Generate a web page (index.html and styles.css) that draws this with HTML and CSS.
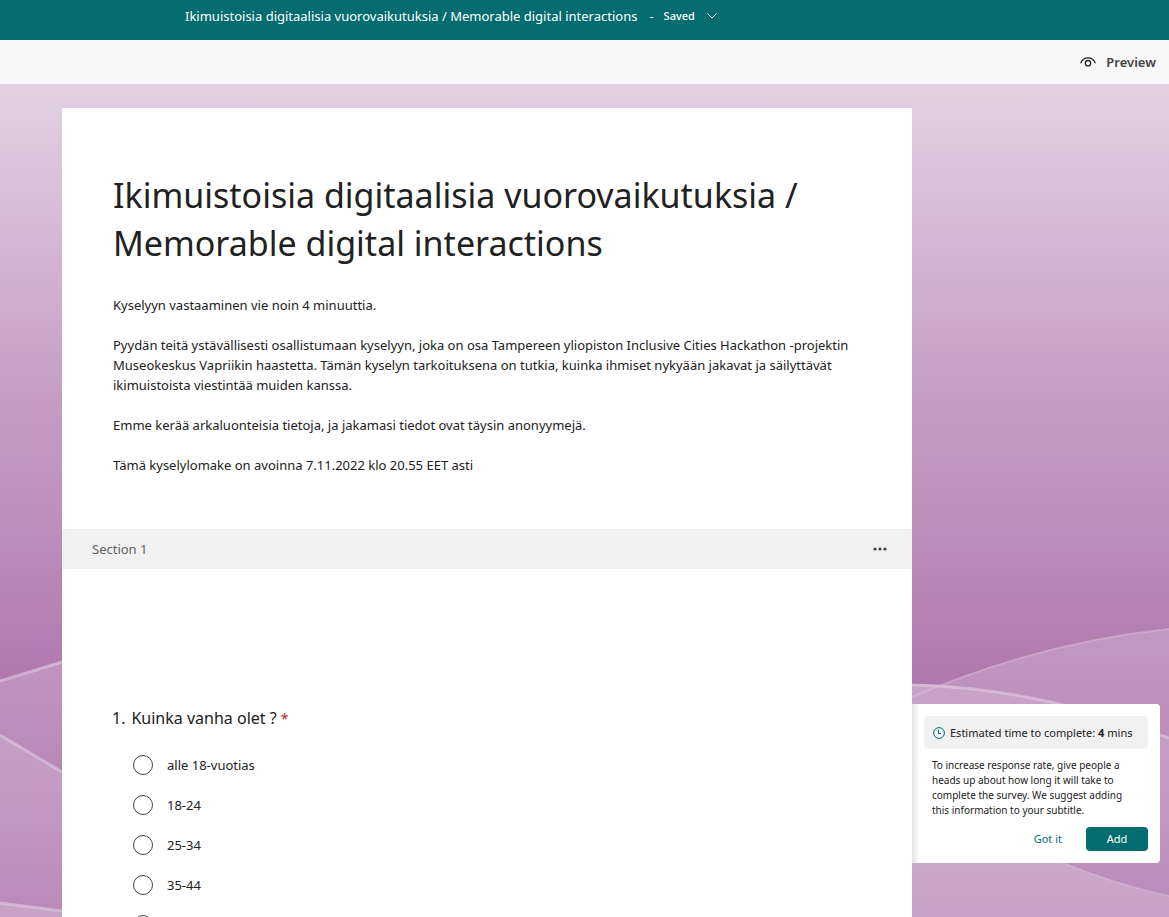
FILE: index.html
```html
<!DOCTYPE html>
<html lang="fi">
<head>
<meta charset="utf-8">
<meta name="viewport" content="width=device-width, initial-scale=1">
<title>Ikimuistoisia digitaalisia vuorovaikutuksia / Memorable digital interactions</title>
<link rel="stylesheet" href="styles.css">
</head>
<body>
<header class="topbar">
  <span class="topbar-title">Ikimuistoisia digitaalisia vuorovaikutuksia / Memorable digital interactions</span>
  <span class="topbar-dash">-</span>
  <button class="saved" type="button">Saved
    <svg class="chevron" viewBox="0 0 10 6" aria-hidden="true"><path d="M.5.5 5 5 9.500.5"/></svg>
  </button>
</header>
<nav class="toolbar">
  <button class="preview" type="button">
    <svg class="eye" viewBox="0 0 16 10" aria-hidden="true"><path d="M.7 6.200C1.800 2.900 4.500.8 8 .8s6.200 2.100 7.300 5.400"/><circle cx="8" cy="6.200" r="2.700"/></svg>
    Preview
  </button>
</nav>
<main class="canvas">
  <svg class="backdrop" viewBox="0 0 1169 833" preserveAspectRatio="none" aria-hidden="true">
    <defs>
      <linearGradient id="sky" x1="0" y1="0" x2="0" y2="600" gradientUnits="userSpaceOnUse">
        <stop offset="0" stop-color="#e3d1e3"/>
        <stop offset=".26" stop-color="#d4b7d4"/>
        <stop offset=".52" stop-color="#c59dc3"/>
        <stop offset=".75" stop-color="#bc8dba"/>
        <stop offset="1" stop-color="#b078ae"/>
      </linearGradient>
      <linearGradient id="hill" x1="0" y1="545" x2="0" y2="690" gradientUnits="userSpaceOnUse">
        <stop offset="0" stop-color="#c399c2"/>
        <stop offset="1" stop-color="#b987b7"/>
      </linearGradient>
      <linearGradient id="dune" x1="0" y1="600" x2="0" y2="820" gradientUnits="userSpaceOnUse">
        <stop offset="0" stop-color="#c9a3c8"/>
        <stop offset=".5" stop-color="#c39ac2"/>
        <stop offset="1" stop-color="#bb8ab9"/>
      </linearGradient>
      <linearGradient id="front" x1="0" y1="760" x2="0" y2="833" gradientUnits="userSpaceOnUse">
        <stop offset="0" stop-color="#cbaaca"/>
        <stop offset="1" stop-color="#c8a2c6"/>
      </linearGradient>
    </defs>
    <rect width="1169" height="833" fill="url(#sky)"/>
    <path fill="url(#hill)" d="M0 598 62 578V833H0z"/>
    <path fill="url(#dune)" d="M0 651 62 688V833H0z"/>
    <path fill="url(#front)" d="M0 819 62 827V833H0z"/>
    <path fill="url(#hill)" d="M912 613Q1040 558 1169 545V833H912z"/>
    <path fill="url(#dune)" d="M912 600Q1040 604 1169 654V833H912z"/>
    <path fill="url(#front)" d="M912 700Q1045 785 1169 812V833H912z"/>
    <g class="rim">
      <path d="M0 597 62 578M0 651 62 688M0 819 62 827M912 601Q1040 604 1169 654"/>
      <path class="thin" d="M912 613Q1040 558 1169 545M912 700Q1045 785 1169 812"/>
    </g>
  </svg>
  <form class="sheet">
    <section class="intro">
      <h1>Ikimuistoisia digitaalisia vuorovaikutuksia / Memorable digital interactions</h1>
      <p>Kyselyyn vastaaminen vie noin 4 minuuttia.</p>
      <p>Pyydän teitä ystävällisesti osallistumaan kyselyyn, joka on osa Tampereen yliopiston Inclusive Cities Hackathon -projektin Museokeskus Vapriikin haastetta. Tämän kyselyn tarkoituksena on tutkia, kuinka ihmiset nykyään jakavat ja säilyttävät ikimuistoista viestintää muiden kanssa.</p>
      <p>Emme kerää arkaluonteisia tietoja, ja jakamasi tiedot ovat täysin anonyymejä.</p>
      <p>Tämä kyselylomake on avoinna 7.11.2022 klo 20.55 EET asti</p>
    </section>
    <div class="section-bar">
      <h2>Section 1</h2>
      <button class="more" type="button" aria-label="More options">
        <svg viewBox="0 0 14 4" aria-hidden="true"><circle cx="2" cy="2" r="1.600"/><circle cx="7" cy="2" r="1.600"/><circle cx="12" cy="2" r="1.600"/></svg>
      </button>
    </div>
    <div class="question-area">
      <fieldset class="question">
        <legend><span class="number">1.</span>Kuinka vanha olet ? <span class="required">*</span></legend>
        <label class="choice"><input type="radio" name="age">alle 18-vuotias</label>
        <label class="choice"><input type="radio" name="age">18-24</label>
        <label class="choice"><input type="radio" name="age">25-34</label>
        <label class="choice"><input type="radio" name="age">35-44</label>
        <label class="choice"><input type="radio" name="age" aria-label="45-54"></label>
      </fieldset>
      <aside class="callout">
        <div class="estimate">
          <svg class="clock" viewBox="0 0 12 12" aria-hidden="true"><circle cx="6" cy="6" r="5.400"/><path d="M5.500 2.800V6.500H8"/></svg>
          <span>Estimated time to complete: <b>4</b> mins</span>
        </div>
        <p class="hint">To increase response rate, give people a heads up about how long it will take to complete the survey. We suggest adding this information to your subtitle.</p>
        <div class="actions">
          <button class="link-button" type="button">Got it</button>
          <button class="primary" type="button">Add</button>
        </div>
      </aside>
    </div>
  </form>
</main>
</body>
</html>
```

FILE: styles.css
```css
* { box-sizing: border-box; }

body {
  margin: 0;
  height: 100vh;
  display: flex;
  flex-direction: column;
  overflow: hidden;
  font: 13px/20px "Noto Sans", "Open Sans", sans-serif;
  color: #212121;
}

button {
  font: inherit;
  color: inherit;
  border: 0;
  padding: 0;
  background: none;
  cursor: pointer;
}

.topbar {
  flex: none;
  display: flex;
  align-items: center;
  height: 40px;
  padding: 0 0 8px 185px;
  background: #036c70;
  color: #fff;
  white-space: nowrap;
}

.topbar-dash { margin: 0 10px 0 12px; }

.saved {
  display: flex;
  align-items: center;
  gap: 12px;
  font-size: 11px;
  font-weight: 500;
}

.chevron {
  width: 10px;
  height: 6px;
  fill: none;
  stroke: #fff;
}

.toolbar {
  flex: none;
  display: flex;
  justify-content: flex-end;
  height: 44px;
  padding: 0 13px;
  background: #f9f9f9;
}

.preview {
  display: flex;
  align-items: center;
  gap: 10px;
  font-weight: 600;
  color: #444;
}

.eye {
  width: 16px;
  height: 10px;
  fill: none;
  stroke: #222;
  stroke-width: 1.300;
}

.canvas {
  position: relative;
  flex: 1;
  min-height: 0;
  padding: 24px 0 0 62px;
}

.backdrop {
  position: absolute;
  inset: 0;
  width: 100%;
  height: 100%;
}

.rim path {
  fill: none;
  stroke: #dcc3dc;
  stroke-width: 3;
  opacity: .7;
}

.rim .thin { stroke-width: 2; opacity: .45; }

.sheet {
  position: relative;
  max-width: 850px;
  background: #fff;
}

.intro { padding: 63px 50px 54px 51px; }

h1 {
  margin: 0 0 28px;
  font-size: 34px;
  line-height: 48px;
  font-weight: 400;
}

.intro p { margin: 0 0 20px; }
.intro p:last-child { margin: 0; }

.section-bar {
  display: flex;
  align-items: center;
  justify-content: space-between;
  height: 40px;
  padding: 0 25px 0 30px;
  background: #f1f1f1;
}

.section-bar h2 {
  margin: 0;
  font-size: 13px;
  font-weight: 400;
  color: #616161;
}

.more { display: flex; }

.more svg { width: 14px; height: 4px; fill: #444; }

.question-area {
  position: relative;
  padding: 137px 50px 0;
  background: #fff;
}

.question {
  min-width: 0;
  margin: 0;
  padding: 0;
  border: 0;
}

legend {
  padding: 0;
  margin-bottom: 14px;
  font-size: 16px;
  line-height: 24px;
}

.number { margin-right: 6px; }

.required { color: #b3282d; font-size: 14px; }

.choice {
  display: flex;
  align-items: center;
  gap: 14px;
  height: 40px;
  padding-left: 21px;
}

.choice input {
  appearance: none;
  flex: none;
  width: 20px;
  height: 20px;
  margin: 0;
  border: 1px solid #444;
  border-radius: 50%;
  background: #fff;
}

.callout {
  position: absolute;
  left: 100%;
  top: 135px;
  width: 248px;
  padding: 12px;
  border-radius: 0 4px 4px 0;
  background: linear-gradient(90deg, #e4e4e4, #fff 8px);
  font-size: 11px;
}

.estimate {
  display: flex;
  align-items: center;
  gap: 5px;
  height: 33px;
  padding: 0 9px;
  border-radius: 4px;
  background: #f1f1f1;
  white-space: nowrap;
}

.clock {
  width: 12px;
  height: 12px;
  fill: none;
  stroke: #036c70;
}

.hint {
  margin: 9px 8px;
  font-size: 10px;
  line-height: 15px;
}

.actions {
  display: flex;
  justify-content: flex-end;
  gap: 24px;
}

.link-button { color: #036c70; }

.primary {
  width: 62px;
  height: 24px;
  border-radius: 4px;
  background: #036c70;
  color: #fff;
}
```
